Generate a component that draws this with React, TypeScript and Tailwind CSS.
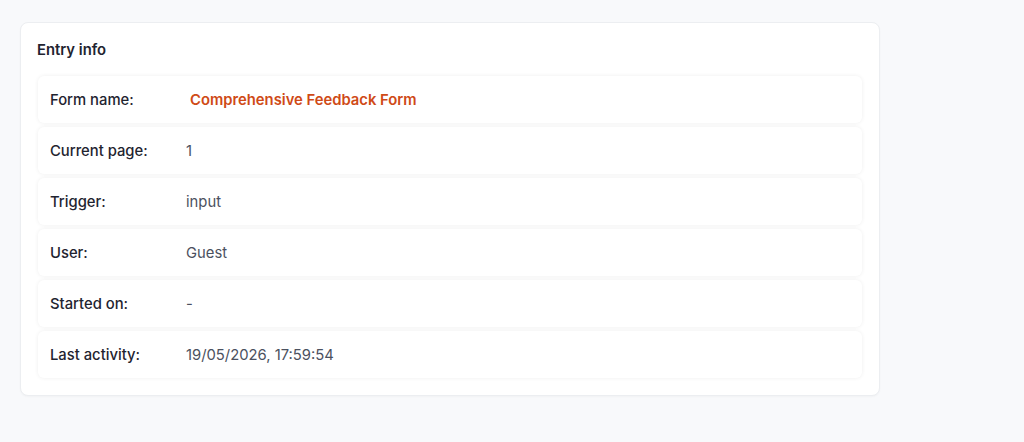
import React from "react";

const rows: { label: string; value: string; accent?: boolean }[] = [
  { label: "Form name:", value: "Comprehensive Feedback Form", accent: true },
  { label: "Current page:", value: "1" },
  { label: "Trigger:", value: "input" },
  { label: "User:", value: "Guest" },
  { label: "Started on:", value: "-" },
  { label: "Last activity:", value: "19/05/2026, 17:59:54" },
];

export default function App() {
  return (
    <div
      className="min-h-[442px] w-full bg-[#f8f9fb] pl-5 pt-[22px]"
      style={{ fontFamily: "Inter, 'Noto Sans', sans-serif" }}
    >
      <div className="w-[860px] rounded-lg border border-[#eceef1] bg-white px-4 pt-[17px] pb-[17px] shadow-[0_1px_2px_rgba(0,0,0,0.03)]">
        <h2 className="text-[14.8px] leading-5 font-semibold text-[#1f2430]">Entry info</h2>
        <div className="mt-4 flex flex-col gap-1">
          {rows.map((r) => (
            <div
              key={r.label}
              className="mx-px flex h-[47px] items-center rounded-md bg-white px-3 text-[14.8px] leading-5 shadow-[0_0_4px_rgba(0,0,0,0.07)]"
            >
              <div className="w-[136px] shrink-0 font-medium text-[#1f2430]">{r.label}</div>
              {r.accent ? (
                <div className="pl-1 font-semibold text-[#cf4a16]">{r.value}</div>
              ) : (
                <div className="text-[#4b5160]">{r.value}</div>
              )}
            </div>
          ))}
        </div>
      </div>
    </div>
  );
}
